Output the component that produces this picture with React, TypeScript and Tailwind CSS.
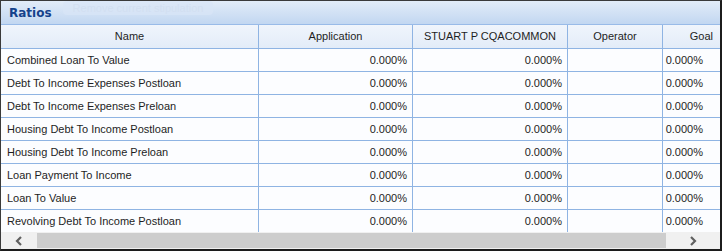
import React from "react";

const rows = [
  "Combined Loan To Value",
  "Debt To Income Expenses Postloan",
  "Debt To Income Expenses Preloan",
  "Housing Debt To Income Postloan",
  "Housing Debt To Income Preloan",
  "Loan Payment To Income",
  "Loan To Value",
  "Revolving Debt To Income Postloan",
];

const cols = [
  { key: "name", label: "Name", w: "w-[258px]", head: "justify-center", cell: "justify-start pl-[6px]" },
  { key: "app", label: "Application", w: "w-[154px]", head: "justify-center", cell: "justify-end pr-[5px]" },
  { key: "stu", label: "STUART P CQACOMMON", w: "w-[155px]", head: "justify-center", cell: "justify-end pr-[5px]" },
  { key: "op", label: "Operator", w: "w-[95px]", head: "justify-center", cell: "justify-end pr-[5px]" },
  { key: "goal", label: "Goal", w: "w-[60px]", head: "justify-end pr-[9px]", cell: "justify-end pr-[19px]" },
];

const App = () => {
  return (
    <div className="w-[722px] h-[251px] bg-white flex flex-col overflow-hidden border-l border-t border-[#3a3a3a] border-r-2 border-b-2 border-r-[#1c1c1c] border-b-[#1c1c1c] relative text-[11px] text-[#1e1e1e]" style={{ fontFamily: '"Liberation Sans", Arial, sans-serif' }}>
      {/* title bar */}
      <div className="h-[24px] shrink-0 flex items-center pl-[8px] bg-gradient-to-b from-[#e2ecf8] to-[#c2d7f1] border-b border-[#99bbe8]">
        <span className="font-bold text-[#15428b] text-[12px]" style={{ fontFamily: '"DejaVu Sans", sans-serif' }}>Ratios</span>
      </div>
      {/* faded tooltip */}
      <div className="absolute left-[62px] top-0 w-[150px] h-[14px] bg-[#d9e6f6]/70 flex items-center justify-center text-[#d2dff1] text-[11px] leading-[12px] rounded-sm">
        Remove current stipulation
      </div>

      {/* grid */}
      <div className="flex-1 overflow-hidden">
        <div className="flex h-[24px] bg-gradient-to-b from-[#f0f5fc] to-[#e3ecf8] border-b border-[#8fb4e3]">
          {cols.map((c) => (
            <div key={c.key} className={`${c.w} shrink-0 flex items-center ${c.head} border-r border-[#8fb4e3]`}>
              {c.label}
            </div>
          ))}
        </div>
        {rows.map((r) => (
          <div key={r} className="flex h-[23px] bg-[#fcfdff] border-b border-[#8fb4e3]">
            {cols.map((c) => (
              <div key={c.key} className={`${c.w} shrink-0 flex items-center ${c.cell} border-r border-[#8fb4e3]`}>
                {c.key === "name" ? r : c.key === "op" ? "" : "0.000%"}
              </div>
            ))}
          </div>
        ))}
      </div>

      {/* horizontal scrollbar */}
      <div className="h-[17px] shrink-0 flex items-center bg-[#f0f0f0]">
        <div className="w-[36px] h-full flex items-center justify-center">
          <svg width="10" height="10" viewBox="0 0 10 10">
            <path d="M7 1 L3 5 L7 9" fill="none" stroke="#606060" strokeWidth="2.2" />
          </svg>
        </div>
        <div className="w-[629px] h-[15px] bg-[#cdcdcd]" />
        <div className="flex-1 h-full flex items-center justify-center">
          <svg width="10" height="10" viewBox="0 0 10 10">
            <path d="M3 1 L7 5 L3 9" fill="none" stroke="#606060" strokeWidth="2.2" />
          </svg>
        </div>
      </div>
    </div>
  );
};

export default App;
